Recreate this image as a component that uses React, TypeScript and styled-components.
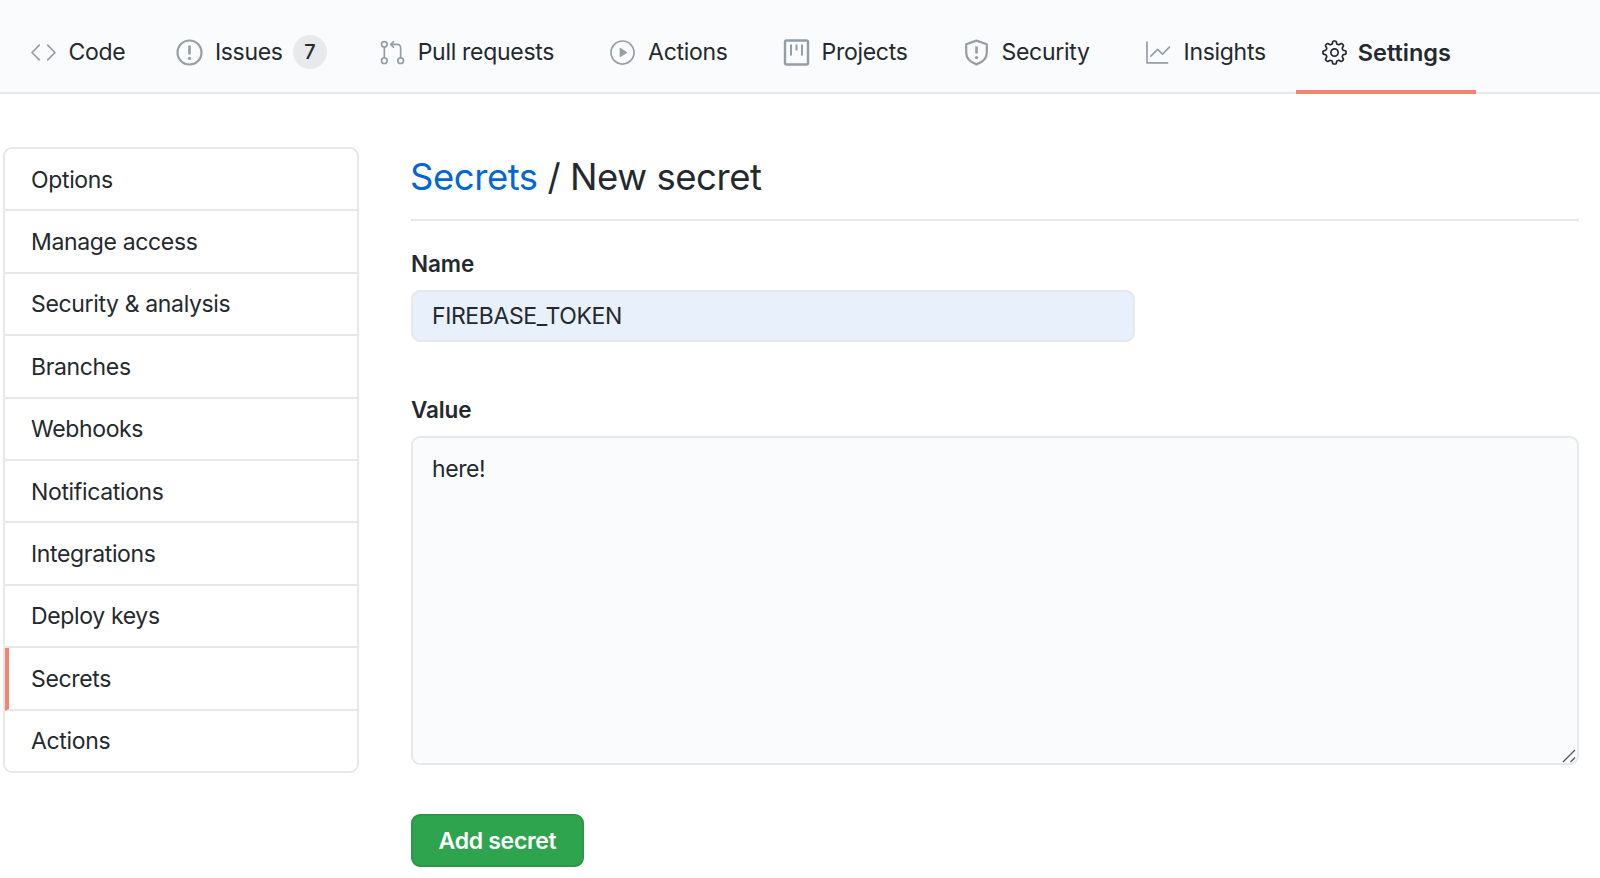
import React, { FC, ReactNode } from 'react';
import styled, { createGlobalStyle } from 'styled-components';
import { GoCode, GoGitPullRequest, GoPlay, GoGraph, GoGear } from 'react-icons/go';

const ACCENT = '#f9826c';
const BORDER = '#e6e8eb';
const TEXT = '#24292e';
const ICON = '#959da5';

const GlobalStyle = createGlobalStyle`
    html, body {
        margin: 0;
        height: 100%;
        background: #fff;
        overflow: hidden;
    }
    body {
        font-family: Inter, "Liberation Sans", sans-serif;
        color: ${TEXT};
    }
    * { box-sizing: border-box; }
`;

const Page = styled.div`
    width: 1600px;
    height: 878px;
    overflow: hidden;
`;

// Верхняя навигация
const TabBar = styled.nav`
    display: flex;
    align-items: stretch;
    height: 94px;
    padding-left: 2px;
    background: #fafbfc;
    border-bottom: 2px solid ${BORDER};
`;

const Tab = styled.a<{ $active?: boolean }>`
    display: flex;
    align-items: center;
    gap: ${props => props.$active ? '10px' : '12px'};
    padding: 14px ${props => props.$active ? '25px' : '27.5px'} 0;
    margin-bottom: -2px;
    margin-left: ${props => props.$active ? '2.5px' : '0'};
    font-size: ${props => props.$active ? '23.5px' : '23px'};
    letter-spacing: ${props => props.$active ? '0' : '-0.3px'};
    font-weight: ${props => props.$active ? 600 : 400};
    color: ${TEXT};
    border-bottom: 4px solid ${props => props.$active ? ACCENT : 'transparent'};

    &:first-child {
        padding-right: 23px;
    }

    &:nth-child(2) {
        padding-right: 24.5px;
    }

    svg {
        width: 27px;
        height: 27px;
        flex: none;
        color: ${props => props.$active ? TEXT : ICON};
    }

    svg[viewBox='0 0 16 16'] {
        stroke-width: 0.35;
    }
`;

const Counter = styled.span`
    display: flex;
    align-items: center;
    justify-content: center;
    width: 34px;
    height: 34px;
    margin-left: -2px;
    border-radius: 50%;
    background: #e8e9eb;
    font-size: 20px;
    font-weight: 500;
`;

const Body = styled.main`
    display: grid;
    grid-template-columns: 356px 1168px;
    column-gap: 52px;
    padding: 53px 0 0 3px;
`;

// Боковое меню
const SideMenu = styled.aside`
    align-self: start;
    border: 2px solid ${BORDER};
    border-radius: 9px;
    background: #fff;
    overflow: hidden;
`;

const MenuItem = styled.a<{ $active?: boolean }>`
    display: flex;
    align-items: center;
    height: 62.4px;
    padding-top: 1px;
    padding-left: ${props => props.$active ? '22px' : '26px'};
    font-size: 23px;
    letter-spacing: -0.35px;
    color: ${TEXT};
    border-left: ${props => props.$active ? `4px solid ${ACCENT}` : 'none'};
    border-bottom: 2px solid ${BORDER};

    &:last-child {
        height: 60px;
        border-bottom: 0;
    }
`;

const Content = styled.section`
    display: flex;
    flex-direction: column;
    align-items: flex-start;
`;

const Title = styled.h1`
    width: 100%;
    height: 74px;
    margin: 0;
    font-size: 36.5px;
    letter-spacing: -0.45px;
    line-height: 60px;
    font-weight: 400;
    text-indent: -1px;
    border-bottom: 2px solid ${BORDER};

    a {
        color: #0366d6;
    }
`;

const FieldLabel = styled.label`
    display: block;
    font-size: 22.5px;
    letter-spacing: -0.1px;
    line-height: 30px;
    font-weight: 600;
`;

const NameLabel = styled(FieldLabel)`
    margin-top: 28px;
    margin-bottom: 11px;
`;

const ValueLabel = styled(FieldLabel)`
    margin-top: 53px;
    margin-bottom: 11px;
`;

const NameInput = styled.input`
    width: 724px;
    height: 52px;
    padding: 0 19px;
    font: 400 23px Inter, "Liberation Sans", sans-serif;
    letter-spacing: -0.4px;
    color: ${TEXT};
    background: #e8f0fc;
    border: 2px solid ${BORDER};
    border-radius: 9px;
    outline: none;
`;

const AreaWrap = styled.div`
    position: relative;
`;

const ValueArea = styled.textarea`
    display: block;
    width: 1168px;
    height: 329px;
    padding: 16px 19px;
    font: 400 23px/30px Inter, "Liberation Sans", sans-serif;
    letter-spacing: -0.4px;
    color: ${TEXT};
    background: #fafbfc;
    border: 2px solid ${BORDER};
    border-radius: 9px;
    outline: none;
    resize: none;
`;

const ResizeGrip = styled.svg`
    position: absolute;
    right: 3px;
    bottom: 2px;
    width: 14px;
    height: 14px;
`;

const SubmitButton = styled.button`
    width: 173px;
    height: 53px;
    margin-top: 49px;
    font: 600 23px Inter, "Liberation Sans", sans-serif;
    letter-spacing: -0.3px;
    color: #fff;
    background: #2ea44f;
    border: 2px solid #2c974b;
    border-radius: 9px;
`;

const IssueIcon: FC = () => (
    <svg viewBox="0 0 27 27" fill="none" stroke="currentColor" strokeWidth="2.2">
        <circle cx="13.5" cy="13.5" r="12" />
        <path d="M13.5 6.5v9" strokeWidth="2.6" />
        <circle cx="13.5" cy="19.4" r="1.7" fill="currentColor" stroke="none" />
    </svg>
);

const ProjectIcon: FC = () => (
    <svg viewBox="0 0 27 27" fill="none" stroke="currentColor" strokeWidth="2.4">
        <rect x="2" y="1.5" width="23" height="24" rx="1.5" />
        <path d="M8 5.5v11M13.5 5.5v6M19 5.5v11" strokeWidth="2" />
    </svg>
);

const ShieldIcon: FC = () => (
    <svg viewBox="0 0 27 27" fill="none" stroke="currentColor" strokeWidth="2.2">
        <path d="M13.5 1.6 3.2 5.2v8.6c0 6 4.6 9.6 10.3 11.6 5.7-2 10.3-5.6 10.3-11.6V5.2z" strokeLinejoin="round" />
        <path d="M13.5 7.5v7" strokeWidth="2.6" />
        <circle cx="13.5" cy="18.6" r="1.6" fill="currentColor" stroke="none" />
    </svg>
);

const tabs: { label: string; icon: ReactNode; counter?: number; active?: boolean }[] = [
    { label: 'Code', icon: <GoCode /> },
    { label: 'Issues', icon: <IssueIcon />, counter: 7 },
    { label: 'Pull requests', icon: <GoGitPullRequest /> },
    { label: 'Actions', icon: <GoPlay /> },
    { label: 'Projects', icon: <ProjectIcon /> },
    { label: 'Security', icon: <ShieldIcon /> },
    { label: 'Insights', icon: <GoGraph /> },
    { label: 'Settings', icon: <GoGear />, active: true },
];

const menu = [
    'Options',
    'Manage access',
    'Security & analysis',
    'Branches',
    'Webhooks',
    'Notifications',
    'Integrations',
    'Deploy keys',
    'Secrets',
    'Actions',
];

const App: FC = () => (
    <Page>
        <GlobalStyle />
        <TabBar>
            {tabs.map(tab => (
                <Tab key={tab.label} $active={tab.active}>
                    {tab.icon}
                    <span>{tab.label}</span>
                    {tab.counter && <Counter>{tab.counter}</Counter>}
                </Tab>
            ))}
        </TabBar>
        <Body>
            <SideMenu>
                {menu.map(item => (
                    <MenuItem key={item} $active={item === 'Secrets'}>{item}</MenuItem>
                ))}
            </SideMenu>
            <Content>
                <Title><a>Secrets</a> / New secret</Title>
                <NameLabel>Name</NameLabel>
                <NameInput defaultValue="FIREBASE_TOKEN" />
                <ValueLabel>Value</ValueLabel>
                <AreaWrap>
                    <ValueArea defaultValue="here!" />
                    <ResizeGrip viewBox="0 0 14 14" stroke="#555" strokeWidth="1.3">
                        <path d="M1 13 13 1M8.5 13 13 8.5" />
                    </ResizeGrip>
                </AreaWrap>
                <SubmitButton>Add secret</SubmitButton>
            </Content>
        </Body>
    </Page>
);

export default App;
